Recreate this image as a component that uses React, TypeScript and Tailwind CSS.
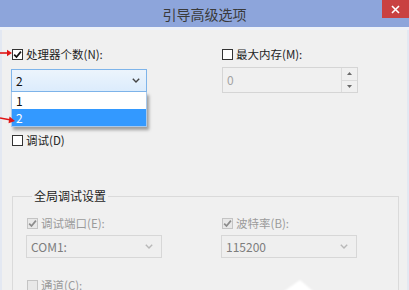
import React from "react";

const font = { fontFamily: '"Noto Sans CJK SC", "Noto Sans", sans-serif' };

function Check({ checked, disabled }: { checked?: boolean; disabled?: boolean }) {
  return (
    <span
      className={
        "flex w-[11px] h-[11px] shrink-0 items-center justify-center border " +
        (disabled ? "border-[#c4c4c4] bg-[#e8e8e8]" : "border-[#333333] bg-white")
      }
    >
      {checked && (
        <svg width="9" height="9" viewBox="0 0 9 9">
          <path
            d="M1.2 4.6 L3.5 7 L7.9 1.6"
            fill="none"
            stroke={disabled ? "#8c8c8c" : "#111"}
            strokeWidth="1.7"
          />
        </svg>
      )}
    </span>
  );
}

function Chevron({ color }: { color: string }) {
  return (
    <svg width="8" height="5" viewBox="0 0 8 5">
      <path d="M0.8 0.8 L4 4 L7.2 0.8" fill="none" stroke={color} strokeWidth="1.4" />
    </svg>
  );
}

function Row({
  label,
  checked,
  disabled,
  className,
}: {
  label: string;
  checked?: boolean;
  disabled?: boolean;
  className?: string;
}) {
  return (
    <div className={"flex h-[16px] items-center gap-[3px] " + (className ?? "")}>
      <Check checked={checked} disabled={disabled} />
      <span
        className={
          "text-[11.5px] leading-[16px] whitespace-nowrap " +
          (disabled ? "text-[#9b9b9b]" : "text-[#1e1e1e]")
        }
      >
        {label}
      </span>
    </div>
  );
}

function DisabledCombo({ value, className }: { value: string; className?: string }) {
  return (
    <div
      className={
        "flex h-[23px] w-[136px] items-center justify-between border border-[#d7d7d7] bg-[#efefef] pl-[4px] pr-[8px] " +
        (className ?? "")
      }
    >
      <span className="text-[12px] text-[#7d7d7d]">{value}</span>
      <Chevron color="#b8b8b8" />
    </div>
  );
}

export default function App() {
  return (
    <div
      className="relative h-[290px] w-[409px] overflow-hidden bg-[#f0f0f0]"
      style={font}
    >
      {/* title bar */}
      <div className="relative flex h-[27px] items-center justify-center bg-[#8da5db]">
        <span className="text-[14px] leading-none text-[#3a3a3a]">引导高级选项</span>
        <div className="absolute right-0 top-0 flex h-[18px] w-[27px] items-center justify-center bg-[#c94141]">
          <svg width="9" height="9" viewBox="0 0 9 9">
            <path d="M1 1 L8 8 M8 1 L1 8" stroke="#fff" strokeWidth="1.6" />
          </svg>
        </div>
      </div>
      <div className="h-[3px] bg-[#eef2f9]" />

      {/* body */}
      <div className="h-[260px] border-x-[2px] border-[#e3e8f2] pl-[10px] pr-[8px]">
        <div className="flex">
          {/* left column */}
          <div className="relative w-[210px]">
            <Row label="处理器个数(N):" checked className="mt-[16px]" />
            <div className="-ml-px mt-[7px] flex h-[23px] w-[136px] items-center justify-between border border-[#7eb4ea] bg-gradient-to-b from-[#ecf4fc] to-[#dcecfc] pl-[4px] pr-[6px]">
              <span className="text-[12px] text-[#111]">2</span>
              <Chevron color="#444" />
            </div>
            <Row label="调试(D)" className="mt-[40px]" />

            {/* open dropdown list */}
            <div className="absolute left-[-1px] top-[62px] w-[136px] border border-[#a9c8ea] border-t-0 bg-white shadow-[2px_3px_3px_rgba(0,0,0,0.35)]">
              <div className="flex h-[17px] items-center pl-[4px] text-[12px] text-[#111]">1</div>
              <div className="flex h-[17px] items-center bg-[#3399ff] pl-[4px] text-[12px] text-white">2</div>
            </div>
          </div>

          {/* right column */}
          <div className="flex-1">
            <Row label="最大内存(M):" className="mt-[16px]" />
            <div className="mt-[5px] flex h-[26px] w-[136px] border border-[#d5d5d5] bg-[#f0f0f0]">
              <div className="flex flex-1 items-center pl-[4px] text-[12px] text-[#a3a3a3]">0</div>
              <div className="flex w-[16px] flex-col border-l border-[#dcdcdc]">
                <div className="flex flex-1 items-center justify-center border-b border-[#dcdcdc]">
                  <svg width="5" height="3" viewBox="0 0 5 3">
                    <path d="M0 3 L2.5 0 L5 3 Z" fill="#6a6a6a" />
                  </svg>
                </div>
                <div className="flex flex-1 items-center justify-center">
                  <svg width="5" height="3" viewBox="0 0 5 3">
                    <path d="M0 0 L2.5 3 L5 0 Z" fill="#6a6a6a" />
                  </svg>
                </div>
              </div>
            </div>
          </div>
        </div>

        {/* group box */}
        <fieldset className="mt-[40px] h-[120px] border border-[#dadada] pl-[14px]">
          <legend className="ml-[5px] px-[2px] text-[12px] leading-[16px] text-[#1e1e1e]">全局调试设置</legend>
          <div className="flex">
            <div className="w-[195px]">
              <Row label="调试端口(E):" checked disabled className="mt-[11px]" />
              <DisabledCombo value="COM1:" className="-ml-px mt-[4px]" />
              <Row label="通道(C):" disabled className="mt-[19px]" />
            </div>
            <div className="flex-1">
              <Row label="波特率(B):" checked disabled className="mt-[11px]" />
              <DisabledCombo value="115200" className="-ml-px mt-[4px]" />
            </div>
          </div>
        </fieldset>
      </div>

      {/* red annotation arrows */}
      <svg className="absolute left-0 top-[48px]" width="14" height="10" viewBox="0 0 14 10">
        <path d="M0 5 L9 5" stroke="#e01515" strokeWidth="1.6" />
        <path d="M7 1.8 L12 5 L7 8.2 Z" fill="#e01515" />
      </svg>
      <svg className="absolute left-0 top-[114px]" width="17" height="12" viewBox="0 0 17 12">
        <path d="M0 4 L11 6" stroke="#e01515" strokeWidth="1.6" />
        <path d="M9.5 2.4 L15 7 L8.5 9.2 Z" fill="#e01515" />
      </svg>

      {/* faded white shape at bottom */}
      <svg className="absolute left-[280px] top-[276px] blur-[1px]" width="36" height="16" viewBox="0 0 36 16">
        <path d="M3 16 L20 4 L34 16 Z" fill="#ffffff" />
      </svg>
    </div>
  );
}
